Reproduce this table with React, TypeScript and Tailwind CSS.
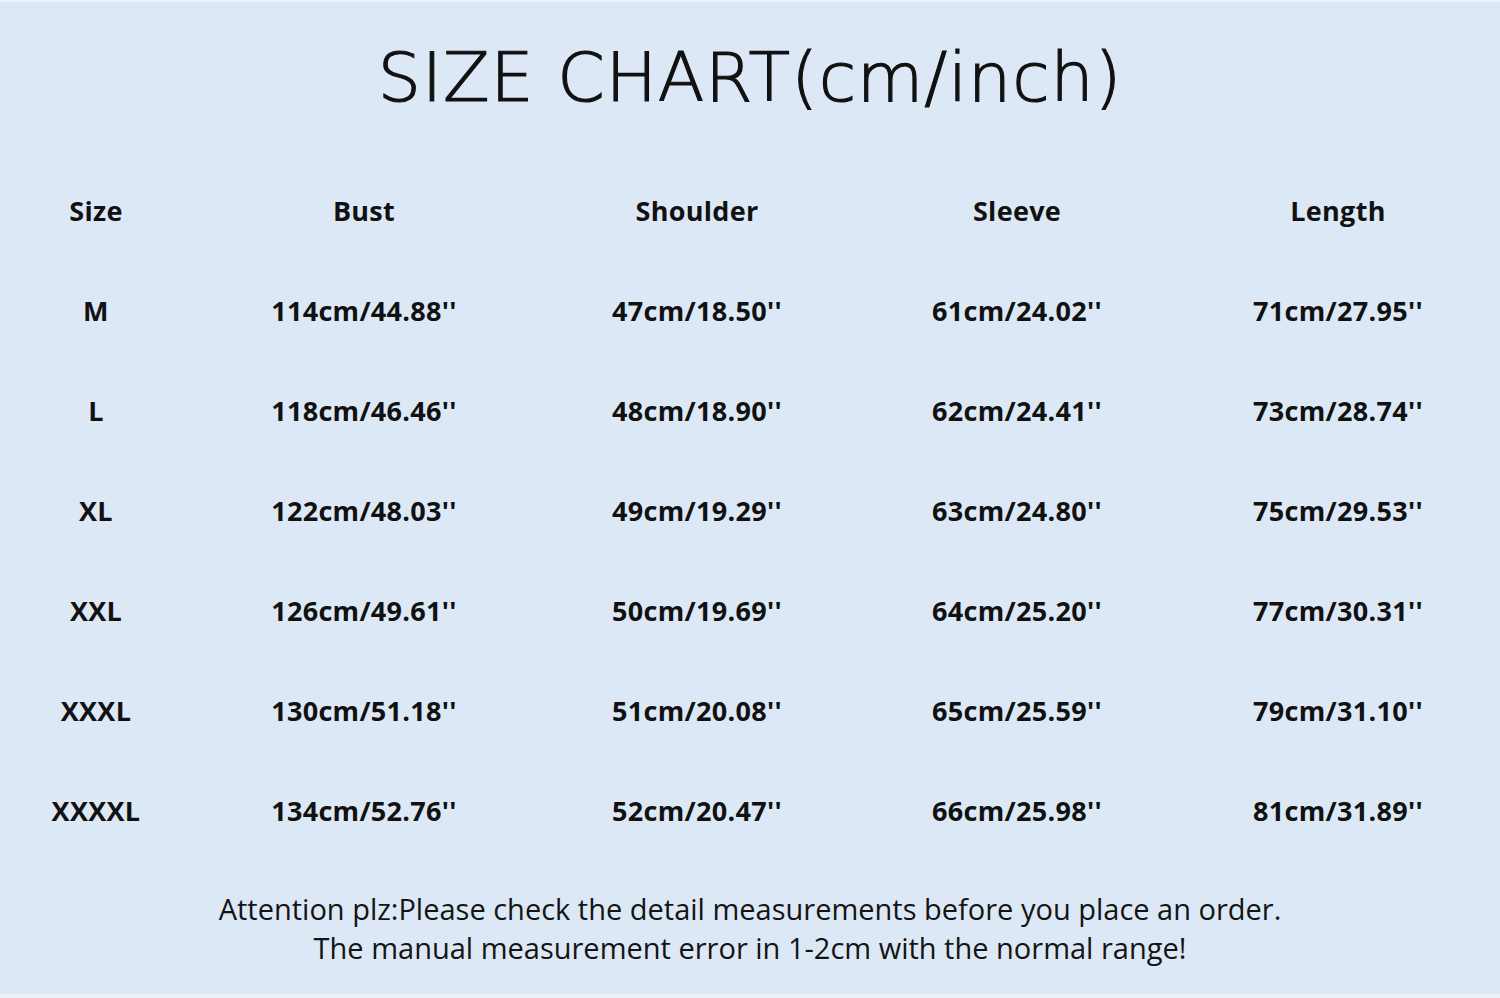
const headers = ['Size', 'Bust', 'Shoulder', 'Sleeve', 'Length'];

const rows: string[][] = [
  ['M', "114cm/44.88''", "47cm/18.50''", "61cm/24.02''", "71cm/27.95''"],
  ['L', "118cm/46.46''", "48cm/18.90''", "62cm/24.41''", "73cm/28.74''"],
  ['XL', "122cm/48.03''", "49cm/19.29''", "63cm/24.80''", "75cm/29.53''"],
  ['XXL', "126cm/49.61''", "50cm/19.69''", "64cm/25.20''", "77cm/30.31''"],
  ['XXXL', "130cm/51.18''", "51cm/20.08''", "65cm/25.59''", "79cm/31.10''"],
  ['XXXXL', "134cm/52.76''", "52cm/20.47''", "66cm/25.98''", "81cm/31.89''"],
];

const gridCols = 'grid grid-cols-[192px_344px_322px_318px_324px]';

export default function App() {
  return (
    <div className="flex h-[998px] w-[1500px] flex-col border-t-2 border-b-4 border-[#eef3f9] bg-[#dce8f5] text-[#111]">
      <h1 className="flex h-[156px] items-center justify-center pb-1 font-['DejaVu_Sans',sans-serif] text-[68px] font-extralight tracking-[1px] text-[#111] [-webkit-text-stroke:1.2px_#111]">
        SIZE CHART(cm/inch)
      </h1>

      <div className="flex flex-col pt-[3px] font-['Open_Sans',sans-serif] text-[27px] font-bold tracking-[0.3px]">
        <div className={gridCols}>
          {headers.map((h) => (
            <div key={h} className="flex h-[100px] items-center justify-center">
              {h}
            </div>
          ))}
        </div>
        {rows.map((row) => (
          <div key={row[0]} className={gridCols}>
            {row.map((cell, i) => (
              <div key={i} className="flex h-[100px] items-center justify-center">
                {cell}
              </div>
            ))}
          </div>
        ))}
      </div>

      <div className="flex flex-col items-center pt-[28px] font-['Open_Sans',sans-serif] text-[29px] leading-[39px] text-[#141414]">
        <p>Attention plz:Please check the detail measurements before you place an order.</p>
        <p>The manual measurement error in 1-2cm with the normal range!</p>
      </div>
    </div>
  );
}
